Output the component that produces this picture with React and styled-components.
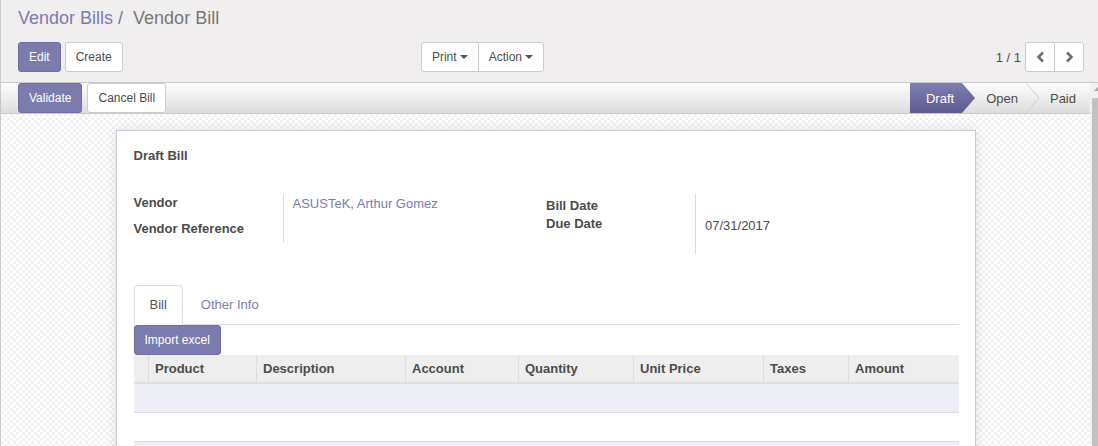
import React from "react";
import styled, { createGlobalStyle } from "styled-components";

const Global = createGlobalStyle`
  html, body { margin: 0; padding: 0; background: #fff; }
  body {
    font-family: "Liberation Sans", Arial, sans-serif;
    font-size: 13px;
    color: #4c4c4c;
  }
  * { box-sizing: border-box; }
`;

const PURPLE = "#7c7bad";

const Root = styled.div`
  width: 1098px;
  height: 446px;
  overflow: hidden;
  border-left: 1px solid #c9c9c9;
  display: flex;
  flex-direction: column;
`;

const ControlPanel = styled.div`
  background: #f0eeee;
  border-bottom: 1px solid #c9c9c9;
  padding: 5px 14px 10px 17px;
  display: flex;
  flex-direction: column;
  gap: 11px;
`;

const Breadcrumb = styled.div`
  font-size: 18px;
  line-height: 26px;
  height: 26px;
  display: flex;
  align-items: center;
`;

const Crumb = styled.span`
  color: ${PURPLE};
`;

const CrumbSep = styled.span`
  color: #77759f;
  padding: 0 10px 0 5px;
`;

const CrumbActive = styled.span`
  color: #777;
`;

const ButtonsRow = styled.div`
  display: flex;
  align-items: center;
  height: 30px;
`;

const LeftArea = styled.div`
  width: 526px;
  display: flex;
  justify-content: space-between;
  align-items: center;
`;

const BtnGroup = styled.div`
  display: flex;
  gap: ${(p) => p.$gap || 0}px;
`;

const Button = styled.button`
  font-family: inherit;
  font-size: 12px;
  line-height: 18px;
  height: 30px;
  padding: 5px 10px;
  border-radius: 3px;
  border: 1px solid ${(p) => (p.$primary ? "#6f6ea3" : "#cccccc")};
  background: ${(p) => (p.$primary ? PURPLE : "#fff")};
  color: ${(p) => (p.$primary ? "#fff" : "#4c4c4c")};
  display: inline-flex;
  align-items: center;
  white-space: nowrap;
  cursor: pointer;
`;

const JoinedButton = styled(Button)`
  border-radius: ${(p) =>
    p.$pos === "first" ? "3px 0 0 3px" : p.$pos === "last" ? "0 3px 3px 0" : "0"};
  ${(p) => (p.$pos === "last" ? "margin-left: -1px;" : "")}
`;

const Caret = styled.span`
  display: inline-block;
  width: 0;
  height: 0;
  margin-left: 3px;
  border-top: 4px solid #555;
  border-left: 4px solid transparent;
  border-right: 4px solid transparent;
`;

const Pager = styled.div`
  margin-left: auto;
  display: flex;
  align-items: center;
  gap: 4px;
`;

const PagerValue = styled.span`
  font-size: 13px;
  color: #4c4c4c;
`;

const PagerButton = styled(JoinedButton)`
  width: 30px;
  justify-content: center;
  padding: 0;
`;

const Chevron = ({ dir }) => (
  <svg width="9" height="12" viewBox="0 0 9 12">
    <polyline
      points={dir === "left" ? "7,1.5 2.5,6 7,10.5" : "2,1.5 6.5,6 2,10.5"}
      fill="none"
      stroke="#6f6f6f"
      strokeWidth="2.6"
    />
  </svg>
);

const ContentArea = styled.div`
  flex: 1;
  display: flex;
  min-height: 0;
`;

const Main = styled.div`
  flex: 1;
  min-width: 0;
  display: flex;
  flex-direction: column;
  overflow: hidden;
`;

const StatusBar = styled.div`
  height: 31px;
  border-bottom: 1px solid #c9c9c9;
  background: linear-gradient(to bottom, #fdfdfd, #dddddd);
  display: flex;
  align-items: flex-start;
  padding-left: 17px;
`;

const StatusButtons = styled.div`
  display: flex;
  gap: 5px;
`;

const Stages = styled.div`
  margin-left: auto;
  display: flex;
  height: 30px;
`;

const Stage = styled.div`
  position: relative;
  height: 30px;
  display: flex;
  align-items: center;
  font-size: 13px;
  padding: 0 ${(p) => (p.$last ? 14 : 8)}px 0 ${(p) => (p.$first ? 16 : 24)}px;
  color: ${(p) => (p.$active ? "#fff" : "#4c4c4c")};
  background: ${(p) =>
    p.$active ? "linear-gradient(to bottom, #7f7eb0, #5c5b91)" : "transparent"};
`;

const StageArrow = styled.svg`
  position: absolute;
  left: 100%;
  top: 0;
  z-index: 1;
`;

const Arrow = ({ active }) => (
  <StageArrow width="14" height="30" viewBox="0 0 14 30">
    {active ? (
      <>
        <defs>
          <linearGradient id="stg" x1="0" y1="0" x2="0" y2="1">
            <stop offset="0" stopColor="#7f7eb0" />
            <stop offset="1" stopColor="#5c5b91" />
          </linearGradient>
        </defs>
        <polygon points="0,0 13,15 0,30" fill="url(#stg)" />
      </>
    ) : (
      <polyline points="0,0 13,15 0,30" fill="none" stroke="#cfcfcf" strokeWidth="1" />
    )}
  </StageArrow>
);

const SheetBg = styled.div`
  flex: 1;
  padding: 16px 0 0;
  background-color: #fbfbfb;
  background-image: repeating-conic-gradient(#f2f2f2 0% 25%, #ffffff 0% 50%);
  background-size: 6px 6px;
`;

const Sheet = styled.div`
  width: 860px;
  margin: 0 auto;
  background: #fff;
  border: 1px solid #c8c8d6;
  box-shadow: 0 0 12px rgba(0, 0, 0, 0.12);
  padding: 16px 16px 0 17px;
  min-height: 400px;
`;

const Title = styled.div`
  font-weight: bold;
  line-height: 18px;
  margin-bottom: 29px;
`;

const Groups = styled.div`
  display: grid;
  grid-template-columns: 1fr 1fr;
  align-items: start;
`;

const Group = styled.div`
  display: grid;
  grid-template-columns: 150px 1fr;
  grid-auto-rows: ${(p) => p.$rows};
`;

const FieldLabel = styled.div`
  font-weight: bold;
  line-height: 18px;
  border-right: 1px solid #dcdcdc;
  padding-top: ${(p) => p.$pt || 0}px;
`;

const FieldValue = styled.div`
  line-height: 18px;
  padding: ${(p) => p.$pt || 0}px 0 0 9px;
  color: ${(p) => (p.$link ? PURPLE : "#4c4c4c")};
`;

const Tabs = styled.div`
  margin-top: 31px;
  display: flex;
  border-bottom: 1px solid #dddddd;
  height: 40px;
`;

const Tab = styled.div`
  padding: 10px 15px;
  line-height: 18px;
  height: 40px;
  margin-right: 2px;
  border: 1px solid ${(p) => (p.$active ? "#dddddd" : "transparent")};
  border-bottom-color: ${(p) => (p.$active ? "#fff" : "transparent")};
  border-radius: 4px 4px 0 0;
  background: ${(p) => (p.$active ? "#fff" : "transparent")};
  color: ${(p) => (p.$active ? "#555" : PURPLE)};
`;

const Toolbar = styled.div`
  display: flex;
`;

const Table = styled.table`
  width: 100%;
  border-collapse: collapse;
  table-layout: fixed;
`;

const Th = styled.th`
  background: #eeeeee;
  font-weight: bold;
  text-align: left;
  height: 28px;
  padding: 0 6px;
  border-left: 1px solid #dddddd;
  border-bottom: 2px solid #dddddd;
  color: #4c4c4c;
  &:first-child { border-left: none; }
`;

const Td = styled.td`
  height: ${(p) => p.$h}px;
  border-bottom: 1px solid #dddddd;
  background: ${(p) => (p.$odd ? "#eeeef6" : "#fff")};
`;

const Scrollbar = styled.div`
  width: 8px;
  background: #f1f1f1;
  position: relative;
  padding-left: 2px;
  display: flex;
  flex-direction: column;
`;

const ScrollArrow = styled.div`
  margin: 4px 0 0 2px;
  width: 0;
  height: 0;
  border-left: 4px solid transparent;
  border-right: 4px solid transparent;
  border-bottom: 4px solid #a3a3a3;
`;

const Thumb = styled.div`
  margin-top: 7px;
  flex: 1;
  background: #c1c1c1;
`;

const columns = [
  ["", 15],
  ["Product", 108],
  ["Description", 149],
  ["Account", 113],
  ["Quantity", 115],
  ["Unit Price", 130],
  ["Taxes", 85],
  ["Amount", 110],
];

const rows = [
  { odd: true, h: 29 },
  { odd: false, h: 29 },
  { odd: true, h: 28 },
];

export default function App() {
  return (
    <>
      <Global />
      <Root>
        <ControlPanel>
          <Breadcrumb>
            <Crumb>Vendor Bills</Crumb>
            <CrumbSep>/</CrumbSep>
            <CrumbActive>Vendor Bill</CrumbActive>
          </Breadcrumb>
          <ButtonsRow>
            <LeftArea>
              <BtnGroup $gap={4}>
                <Button $primary>Edit</Button>
                <Button>Create</Button>
              </BtnGroup>
              <BtnGroup>
                <JoinedButton $pos="first">
                  Print <Caret />
                </JoinedButton>
                <JoinedButton $pos="last">
                  Action <Caret />
                </JoinedButton>
              </BtnGroup>
            </LeftArea>
            <Pager>
              <PagerValue>1 / 1</PagerValue>
              <BtnGroup>
                <PagerButton $pos="first" aria-label="Previous">
                  <Chevron dir="left" />
                </PagerButton>
                <PagerButton $pos="last" aria-label="Next">
                  <Chevron dir="right" />
                </PagerButton>
              </BtnGroup>
            </Pager>
          </ButtonsRow>
        </ControlPanel>
        <ContentArea>
          <Main>
            <StatusBar>
              <StatusButtons>
                <Button $primary>Validate</Button>
                <Button>Cancel Bill</Button>
              </StatusButtons>
              <Stages>
                <Stage $first $active>
                  Draft
                  <Arrow active />
                </Stage>
                <Stage>
                  Open
                  <Arrow />
                </Stage>
                <Stage $last>Paid</Stage>
              </Stages>
            </StatusBar>
            <SheetBg>
              <Sheet>
                <Title>Draft Bill</Title>
                <Groups>
                  <Group $rows="26px 23px">
                    <FieldLabel>Vendor</FieldLabel>
                    <FieldValue $link $pt={1}>ASUSTeK, Arthur Gomez</FieldValue>
                    <FieldLabel>Vendor Reference</FieldLabel>
                    <FieldValue />
                  </Group>
                  <Group $rows="21px 39px">
                    <FieldLabel $pt={3}>Bill Date</FieldLabel>
                    <FieldValue />
                    <FieldLabel>Due Date</FieldLabel>
                    <FieldValue $pt={2}>07/31/2017</FieldValue>
                  </Group>
                </Groups>
                <Tabs>
                  <Tab $active>Bill</Tab>
                  <Tab>Other Info</Tab>
                </Tabs>
                <Toolbar>
                  <Button $primary>Import excel</Button>
                </Toolbar>
                <Table>
                  <colgroup>
                    {columns.map(([name, w], i) => (
                      <col key={i} style={{ width: w }} />
                    ))}
                  </colgroup>
                  <thead>
                    <tr>
                      {columns.map(([name], i) => (
                        <Th key={i}>{name}</Th>
                      ))}
                    </tr>
                  </thead>
                  <tbody>
                    {rows.map((r, i) => (
                      <tr key={i}>
                        {columns.map((c, j) => (
                          <Td key={j} $odd={r.odd} $h={r.h} />
                        ))}
                      </tr>
                    ))}
                  </tbody>
                </Table>
              </Sheet>
            </SheetBg>
          </Main>
          <Scrollbar>
            <ScrollArrow />
            <Thumb />
          </Scrollbar>
        </ContentArea>
      </Root>
    </>
  );
}
